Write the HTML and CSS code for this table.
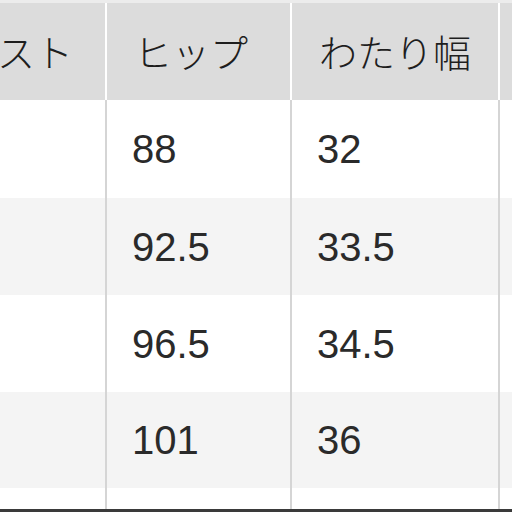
FILE: index.html
```html
<!DOCTYPE html>
<html lang="ja">
<head>
<meta charset="utf-8">
<link rel="stylesheet" href="styles.css">
</head>
<body>
<div class="table">
  <div class="row head">
    <div class="cell">ウエスト</div>
    <div class="cell">ヒップ</div>
    <div class="cell">わたり幅</div>
    <div class="cell"></div>
  </div>
  <div class="row r1">
    <div class="cell"></div>
    <div class="cell">88</div>
    <div class="cell">32</div>
    <div class="cell"></div>
  </div>
  <div class="row r2 alt">
    <div class="cell"></div>
    <div class="cell">92.5</div>
    <div class="cell">33.5</div>
    <div class="cell"></div>
  </div>
  <div class="row r3">
    <div class="cell"></div>
    <div class="cell">96.5</div>
    <div class="cell">34.5</div>
    <div class="cell"></div>
  </div>
  <div class="row r4 alt">
    <div class="cell"></div>
    <div class="cell">101</div>
    <div class="cell">36</div>
    <div class="cell"></div>
  </div>
  <div class="row r5">
    <div class="cell"></div>
    <div class="cell"></div>
    <div class="cell"></div>
    <div class="cell"></div>
  </div>
  <div class="edge"></div>
</div>
</body>
</html>
```
FILE: styles.css
```css
* { box-sizing: border-box; }
html, body {
  margin: 0;
  padding: 0;
  background: #ffffff;
  overflow: hidden;
}
.table {
  margin-left: -106px;
  width: 820px;
  font-family: "Liberation Sans", "Noto Sans CJK JP", sans-serif;
  color: #2a2a2a;
}
.row {
  display: grid;
  grid-template-columns: 213px 185px 208px 214px;
  background: #ffffff;
}
.row.alt { background: #f4f4f4; }
.cell {
  display: flex;
  align-items: center;
  padding-left: 25px;
  padding-top: 1px;
  border-right: 2px solid #d5d5d5;
  font-size: 40px;
  white-space: nowrap;
  overflow: hidden;
}
.head {
  background: #dcdcdc;
  height: 100px;
  border-top: 3px solid #ececec;
}
.head .cell {
  border-right-color: #ffffff;
  font-family: "Noto Sans CJK JP", sans-serif;
  font-weight: 300;
  font-size: 38px;
  color: #1e1e1e;
  padding-left: 27px;
  padding-top: 0;
  padding-bottom: 2px;
}
.r1 { height: 98px; }
.r2 { height: 97px; }
.r3 { height: 97px; }
.r4 { height: 96px; }
.r5 { height: 21px; }
.edge {
  height: 3px;
  background: #3a3a3a;
}
```
